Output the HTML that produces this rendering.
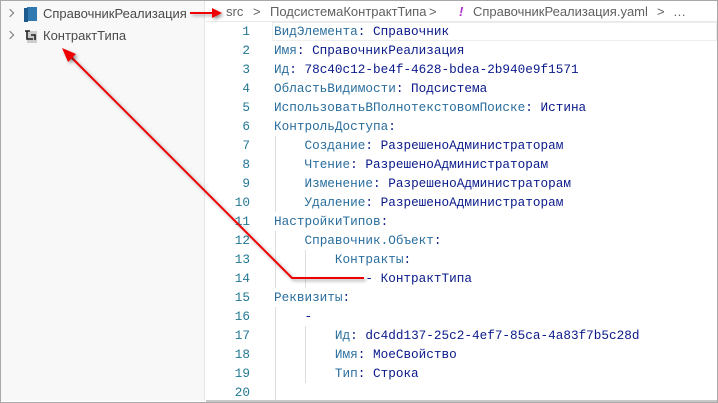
<!DOCTYPE html>
<html><head><meta charset="utf-8"><style>
*{margin:0;padding:0;box-sizing:border-box}
body{width:718px;height:403px;overflow:hidden;background:#fff;position:relative;font-family:"Liberation Sans",sans-serif}
#frame{position:absolute;left:0;top:0;width:718px;height:403px;border:1px solid #a8a8a8}
#side{position:absolute;left:1px;top:1px;width:204px;height:400px;background:#f8f8f9;border-right:1px solid #e4e4e4}
.row{position:absolute;left:0;height:22px;font-size:13px;color:#4a4a4a;line-height:22px}
.chev{position:absolute;left:6px;top:7px;width:6px;height:6px;border-right:1.2px solid #777;border-bottom:1.2px solid #777;transform:rotate(-45deg)}
#bc{position:absolute;left:206px;top:1px;width:511px;height:21px;font-size:13px;color:#616161;line-height:22px;white-space:nowrap}
#code{position:absolute;left:206px;top:22px;width:511px;height:378px;font-family:"Liberation Mono",monospace;font-size:12.7px}
.ln{position:absolute;left:0;width:44px;text-align:right;color:#237893;height:19px;line-height:19px}
.tx{position:absolute;left:68px;height:19px;line-height:19px;white-space:pre;color:#0a1a8a}
.k{color:#2a6e9e}
.g{position:absolute;width:1px;background:#dedede}
#bot{position:absolute;left:206px;top:400px;width:511px;height:2px;background:#c8c8c8}
</style></head><body>
<div id="side">
 <div class="row" style="top:2px;width:204px"><span class="chev"></span>
  <svg style="position:absolute;left:23px;top:4px" width="13" height="15"><rect x="3" y="0" width="10" height="14" fill="#2f78b0"/><rect x="0" y="1" width="4" height="14" fill="#1c5a8c"/></svg>
  <span style="position:absolute;left:42px">СправочникРеализация</span></div>
 <div class="row" style="top:24px;width:204px"><span class="chev"></span>
  <svg style="position:absolute;left:23px;top:4px" width="14" height="15"><rect x="3" y="2" width="10" height="12" fill="#ccc"/><path d="M1 2h5M3 2v8h6M7 6h4v5" stroke="#222" stroke-width="1.6" fill="none"/></svg>
  <span style="position:absolute;left:42px">КонтрактТипа</span></div>
</div>
<div id="bc"><span style="position:absolute;left:20px">src</span><span style="position:absolute;left:47px">&gt;</span><span style="position:absolute;left:64px">ПодсистемаКонтрактТипа</span><span style="position:absolute;left:223px">&gt;</span><span style="position:absolute;left:253px;color:#b02cd0;font-weight:bold;font-style:italic">!</span><span style="position:absolute;left:267px">СправочникРеализация.yaml</span><span style="position:absolute;left:451px">&gt;</span><span style="position:absolute;left:467px">…</span></div>
<div style="position:absolute;left:206px;top:21px;width:511px;height:1px;background:#e8e8e8"></div>
<div id="code">
 <div style="position:absolute;left:66px;top:0;width:445px;height:19px;border:1px solid #eee"></div>
 <div class="g" style="left:69px;top:114px;height:76px"></div>
 <div class="g" style="left:69px;top:209px;height:57px"></div>
 <div class="g" style="left:99px;top:228px;height:38px"></div>
 <div class="g" style="left:69px;top:285px;height:95px"></div>
 <div class="g" style="left:99px;top:304px;height:57px"></div>
 <div class="ln" style="top:0">1</div><div class="tx" style="top:0"><span class="k">ВидЭлемента</span>: Справочник</div>
 <div class="ln" style="top:19px">2</div><div class="tx" style="top:19px"><span class="k">Имя</span>: СправочникРеализация</div>
 <div class="ln" style="top:38px">3</div><div class="tx" style="top:38px"><span class="k">Ид</span>: 78c40c12-be4f-4628-bdea-2b940e9f1571</div>
 <div class="ln" style="top:57px">4</div><div class="tx" style="top:57px"><span class="k">ОбластьВидимости</span>: Подсистема</div>
 <div class="ln" style="top:76px">5</div><div class="tx" style="top:76px"><span class="k">ИспользоватьВПолнотекстовомПоиске</span>: Истина</div>
 <div class="ln" style="top:95px">6</div><div class="tx" style="top:95px"><span class="k">КонтрольДоступа</span>:</div>
 <div class="ln" style="top:114px">7</div><div class="tx" style="top:114px">    <span class="k">Создание</span>: РазрешеноАдминистраторам</div>
 <div class="ln" style="top:133px">8</div><div class="tx" style="top:133px">    <span class="k">Чтение</span>: РазрешеноАдминистраторам</div>
 <div class="ln" style="top:152px">9</div><div class="tx" style="top:152px">    <span class="k">Изменение</span>: РазрешеноАдминистраторам</div>
 <div class="ln" style="top:171px">10</div><div class="tx" style="top:171px">    <span class="k">Удаление</span>: РазрешеноАдминистраторам</div>
 <div class="ln" style="top:190px">11</div><div class="tx" style="top:190px"><span class="k">НастройкиТипов</span>:</div>
 <div class="ln" style="top:209px">12</div><div class="tx" style="top:209px">    <span class="k">Справочник.Объект</span>:</div>
 <div class="ln" style="top:228px">13</div><div class="tx" style="top:228px">        <span class="k">Контракты</span>:</div>
 <div class="ln" style="top:247px">14</div><div class="tx" style="top:247px">            - КонтрактТипа</div>
 <div class="ln" style="top:266px">15</div><div class="tx" style="top:266px"><span class="k">Реквизиты</span>:</div>
 <div class="ln" style="top:285px">16</div><div class="tx" style="top:285px">    -</div>
 <div class="ln" style="top:304px">17</div><div class="tx" style="top:304px">        <span class="k">Ид</span>: dc4dd137-25c2-4ef7-85ca-4a83f7b5c28d</div>
 <div class="ln" style="top:323px">18</div><div class="tx" style="top:323px">        <span class="k">Имя</span>: МоеСвойство</div>
 <div class="ln" style="top:342px">19</div><div class="tx" style="top:342px">        <span class="k">Тип</span>: Строка</div>
 <div class="ln" style="top:361px">20</div>
</div>
<div id="bot"></div>
<div id="frame"></div>
<svg style="position:absolute;left:0;top:0" width="718" height="403">
 <defs><filter id="s"><feDropShadow dx="2" dy="2" stdDeviation="1.5" flood-color="#000" flood-opacity="0.35"/></filter></defs>
 <g filter="url(#s)" stroke="#e00" stroke-width="2" fill="none">
  <path d="M364 278H292L67 53"/>
  <path d="M190 13H216"/>
 </g>
 <g filter="url(#s)" fill="#e00">
  <path d="M62 48L76 54L68 62Z"/>
  <path d="M222 13L212 8V18Z"/>
 </g>
</svg>
</body></html>
